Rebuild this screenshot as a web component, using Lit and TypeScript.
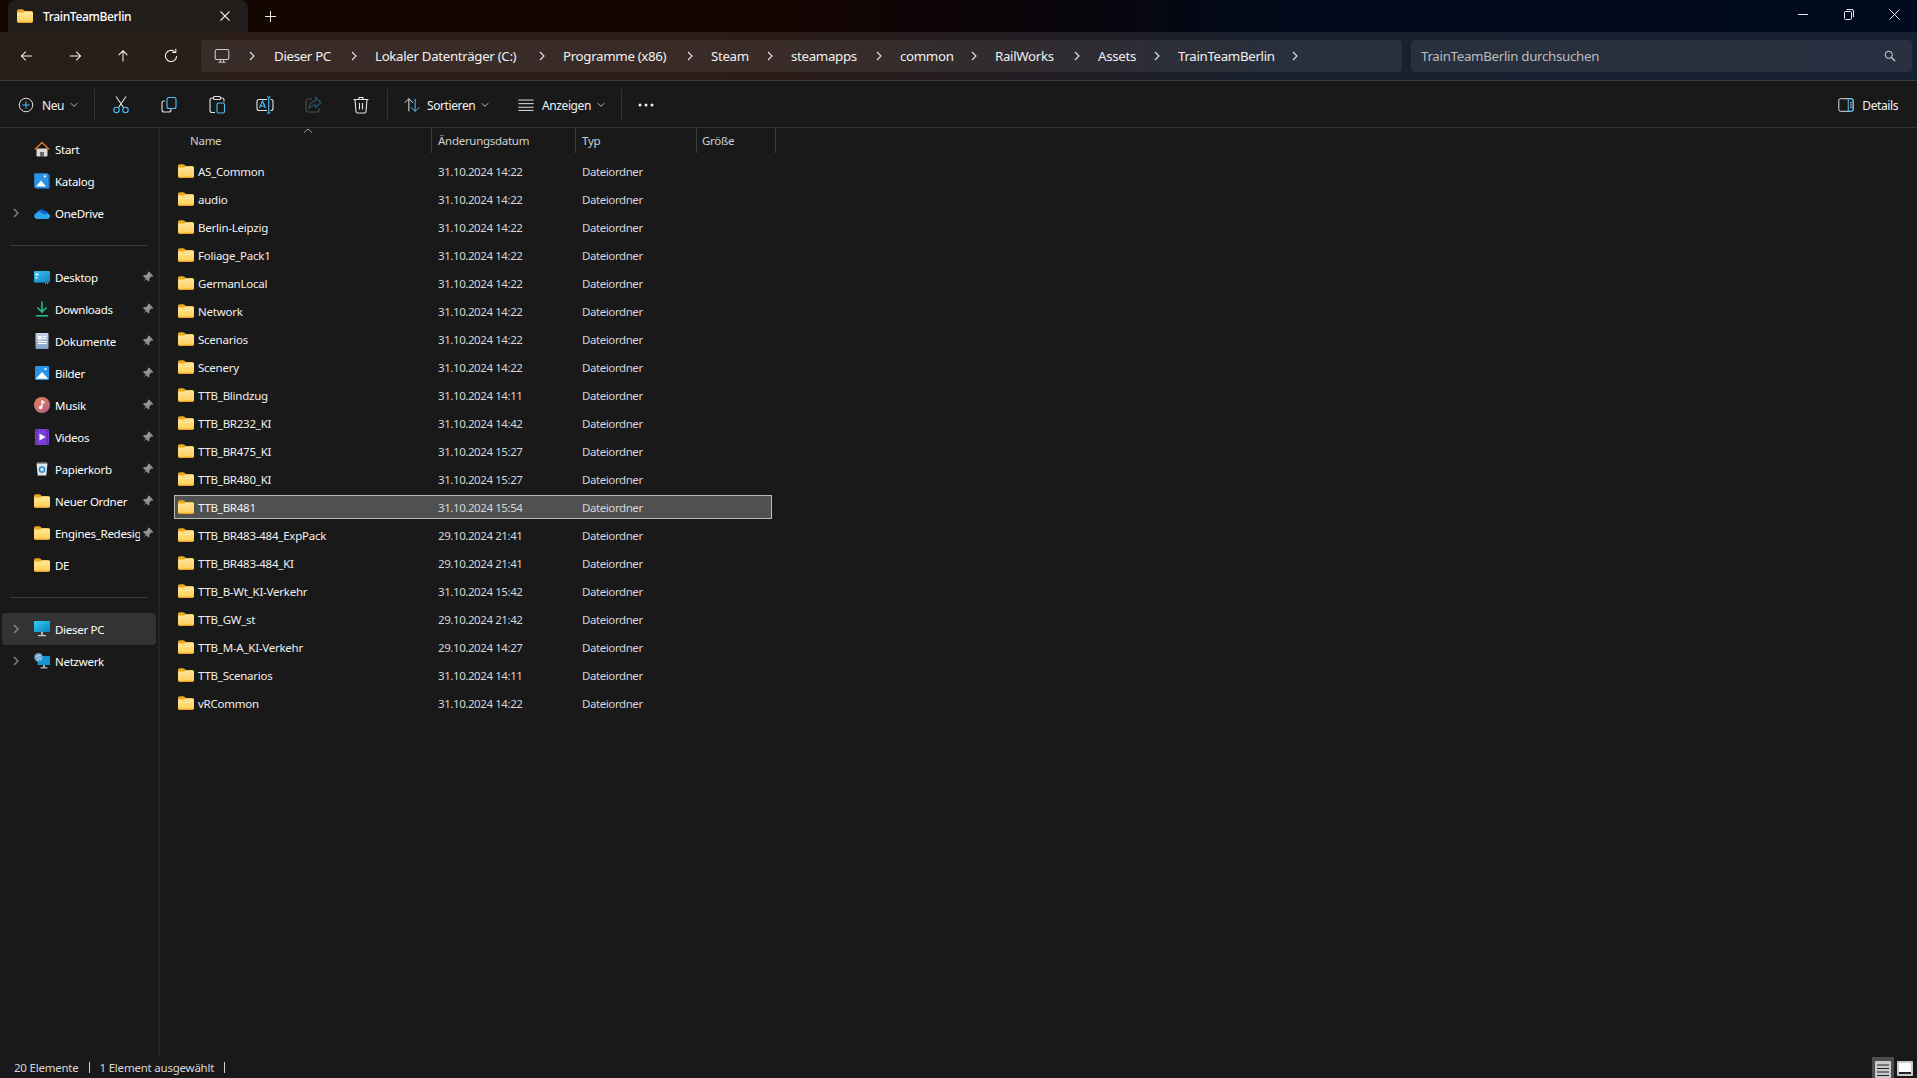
import { LitElement, html, css, svg } from "lit";
import { customElement } from "lit/decorators.js";

const folder = (w = 16, h = 14) => html`<svg class="ic" width=${w} height=${h} viewBox="0 0 16 14">
  <defs><linearGradient id="fg" x1="0" y1="0" x2="0" y2="1"><stop offset="0" stop-color="#ffe89c"/><stop offset="1" stop-color="#ffcf55"/></linearGradient></defs>
  <path d="M0 2.200C0 1 .8.3 1.800.3h3.400c.5 0 .9.2 1.300.5l1.300 1.100h6.400c1 0 1.800.8 1.800 1.800v1H0z" fill="#eaa81f"/>
  <path d="M0 4.600c0-.6.4-1 1-1h4.600c.4 0 .7-.1 1-.3l1.200-.9h6.400c1 0 1.800.8 1.800 1.800v7.700c0 1-.8 1.800-1.800 1.800H1.800c-1 0-1.800-.8-1.800-1.800z" fill="url(#fg)"/>
  <path d="M0 11.900c0 1 .8 1.800 1.800 1.800h12.400c1 0 1.800-.8 1.800-1.800v-.4c0 .8-.8 1.300-1.800 1.300H1.800c-1 0-1.800-.5-1.800-1.300z" fill="#eaa81f"/>
</svg>`;

const chev = html`<svg class="ic" width="8" height="10" viewBox="0 0 8 10"><path d="M2 1l4 4-4 4" fill="none" stroke="#e6e6e6" stroke-width="1.100"/></svg>`;
const navChev = html`<svg class="ic" width="8" height="10" viewBox="0 0 8 10"><path d="M2 1l4 4-4 4" fill="none" stroke="#8a8a8a" stroke-width="1.300"/></svg>`;
const down = html`<svg class="ic" width="8" height="6" viewBox="0 0 8 6"><path d="M.8 1.200L4 4.400l3.200-3.200" fill="none" stroke="#bdbdbd" stroke-width="1"/></svg>`;
const pin = html`<svg class="ic" width="12" height="12" viewBox="0 0 12 12"><path d="M7 .6l4.400 4.400-1 .6-1-.2-2 2v2l-1 1L3.700 7.700.9 11.100 4.300 8.300 1 5l1-1 2 .1 2-2-.2-1z" fill="#8f8f8f"/></svg>`;

const sideIcons: Record<string, unknown> = {
  home: html`<svg class="ic" width="16" height="16" viewBox="0 0 16 16"><path d="M2.500 7.500h11v7a1 1 0 0 1-1 1h-3v-4.500h-3v4.500h-3a1 1 0 0 1-1-1z" fill="#d9d9d9"/><path d="M6.500 11h3v4.500h-3z" fill="#6b6b6b"/><path d="M8 .6L.3 8l1 1L8 2.600 14.700 9l1-1z" fill="#e8761f"/></svg>`,
  cat: html`<svg class="ic" width="16" height="16" viewBox="0 0 16 16"><rect x="13.500" y="1.500" width="2.300" height="13.500" rx=".6" fill="#1c6fc4"/><rect x="1.500" y="14" width="14" height="1.800" rx=".5" fill="#1c6fc4"/><rect x=".2" y=".2" width="14" height="14.500" rx="1" fill="#2a93e6"/><path d="M2 13.500l5-6 5 6z" fill="#fff"/><circle cx="10.800" cy="3.400" r="1.100" fill="#fff"/></svg>`,
  cloud: html`<svg class="ic" width="16" height="11" viewBox="0 0 16 11"><path d="M3.500 5.200A3.800 3.800 0 0 1 10.300 2.800 3 3 0 0 1 14 6l-5 3z" fill="#0f62c4"/><path d="M3 11a3 3 0 0 1-.6-5.900 3 3 0 0 1 4.300-.9l3.500 2.100 2.400-.6A2.600 2.600 0 0 1 16 8.200 2.700 2.700 0 0 1 13.300 11z" fill="#2ba5ee"/></svg>`,
  desk: html`<svg class="ic" width="16" height="13" viewBox="0 0 16 13"><defs><linearGradient id="dk" x1="0" y1="0" x2="1" y2="1"><stop offset="0" stop-color="#36c6ef"/><stop offset="1" stop-color="#157fc5"/></linearGradient></defs><rect width="16" height="11.500" rx="1" fill="url(#dk)"/><rect x="1.500" y="2.500" width="3" height="2" fill="#e9f7fd"/><rect x="1.500" y="6" width="2" height="1.500" fill="#e9f7fd"/><rect x="11" y="11.800" width="1" height="1" fill="#b4e7f8"/><rect x="13" y="11.800" width="1" height="1" fill="#b4e7f8"/></svg>`,
  dl: html`<svg class="ic" width="16" height="16" viewBox="0 0 16 16"><path d="M8 .5v10M3.500 6.500L8 11l4.500-4.500" fill="none" stroke="#21b58e" stroke-width="1.700"/><rect x="2" y="14" width="12" height="1.600" fill="#21b58e"/></svg>`,
  doc: html`<svg class="ic" width="14" height="16" viewBox="0 0 14 16"><defs><linearGradient id="dc" x1="0" y1="0" x2="0" y2="1"><stop offset="0" stop-color="#c5d7ea"/><stop offset="1" stop-color="#7f9fc4"/></linearGradient></defs><rect x=".500" width="13" height="16" rx="1" fill="url(#dc)"/><rect x="3" y="3" width="3.500" height="3.500" fill="#fff"/><path d="M7.500 3.500h4M7.500 5.500h4M3 8.500h8.500M3 10.500h8.500" stroke="#fff" stroke-width="1"/></svg>`,
  pic: html`<svg class="ic" width="14" height="14" viewBox="0 0 14 14"><rect width="14" height="14" rx="1" fill="#2a93e6"/><path d="M.8 12.800L7 6l6.200 6.800z" fill="#fff"/><circle cx="10.500" cy="3" r="1.100" fill="#fff"/></svg>`,
  mus: html`<svg class="ic" width="16" height="16" viewBox="0 0 16 16"><defs><linearGradient id="ms" x1="0" y1="0" x2="1" y2="1"><stop offset="0" stop-color="#e88052"/><stop offset="1" stop-color="#b0608f"/></linearGradient></defs><circle cx="8" cy="8" r="8" fill="url(#ms)"/><path d="M8 3.500v6.500M8 3.500c.5 1.700 1.800 1.900 2.800 2.300" fill="none" stroke="#fff" stroke-width="1.400"/><circle cx="6.500" cy="10.500" r="1.700" fill="#fff"/></svg>`,
  vid: html`<svg class="ic" width="14" height="16" viewBox="0 0 14 16"><rect width="14" height="16" rx="1.500" fill="#7a3fd6"/><path d="M4.500 4.500v7l6-3.500z" fill="#fff"/><path d="M1 2h1.500M1 5h1.500M1 8h1.500M1 11h1.500M1 14h1.500M11.500 2H13M11.500 5H13M11.500 8H13M11.500 11H13M11.500 14H13" stroke="#2c1a5c" stroke-width="1.200"/></svg>`,
  bin: html`<svg class="ic" width="12" height="14" viewBox="0 0 12 14"><path d="M.5 1.500h11l-1.200 12H1.700z" fill="#e3e6e8"/><path d="M.5 1.500L1.500.5h9l1 1z" fill="#aab0b4"/><circle cx="6" cy="7.500" r="2.600" fill="none" stroke="#1f8ce0" stroke-width="1.500"/></svg>`,
  pc: html`<svg class="ic" width="16" height="16" viewBox="0 0 16 16"><defs><linearGradient id="pc" x1="0" y1="0" x2="1" y2="1"><stop offset="0" stop-color="#2fd0f0"/><stop offset="1" stop-color="#0f7ec5"/></linearGradient></defs><rect width="16" height="11" rx=".5" fill="url(#pc)"/><rect x="7" y="11" width="2" height="3" fill="#9fb4c2"/><rect x="4" y="14" width="8" height="1.200" fill="#c6d3dc"/></svg>`,
  net: html`<svg class="ic" width="16" height="16" viewBox="0 0 16 16"><rect x="3.500" y="3" width="12.500" height="9" rx=".5" fill="#1594d2"/><rect x="9" y="12" width="2" height="2.500" fill="#9fb4c2"/><rect x="6.500" y="14.300" width="7" height="1.100" fill="#c6d3dc"/><circle cx="4.500" cy="4.300" r="4.200" fill="#6fa6cf"/><path d="M1.500 4.500c1.500-2 3-1 5-2.500M3 7.800c.5-2 2-3 4.500-2.300" fill="none" stroke="#d6e6f2" stroke-width=".9"/></svg>`,
};

type Side = { t?: string; i?: string; c?: boolean; p?: boolean; sel?: boolean; sep?: boolean };
const side: Side[] = [
  { t: "Start", i: "home" }, { t: "Katalog", i: "cat" }, { t: "OneDrive", i: "cloud", c: true }, { sep: true },
  { t: "Desktop", i: "desk", p: true }, { t: "Downloads", i: "dl", p: true }, { t: "Dokumente", i: "doc", p: true },
  { t: "Bilder", i: "pic", p: true }, { t: "Musik", i: "mus", p: true }, { t: "Videos", i: "vid", p: true },
  { t: "Papierkorb", i: "bin", p: true }, { t: "Neuer Ordner", i: "folder", p: true }, { t: "Engines_Redesign", i: "folder", p: true },
  { t: "DE", i: "folder" }, { sep: true }, { t: "Dieser PC", i: "pc", c: true, sel: true }, { t: "Netzwerk", i: "net", c: true },
];

const rows: [string, string][] = [
  ["AS_Common", "31.10.2024 14:22"], ["audio", "31.10.2024 14:22"], ["Berlin-Leipzig", "31.10.2024 14:22"],
  ["Foliage_Pack1", "31.10.2024 14:22"], ["GermanLocal", "31.10.2024 14:22"], ["Network", "31.10.2024 14:22"],
  ["Scenarios", "31.10.2024 14:22"], ["Scenery", "31.10.2024 14:22"], ["TTB_Blindzug", "31.10.2024 14:11"],
  ["TTB_BR232_KI", "31.10.2024 14:42"], ["TTB_BR475_KI", "31.10.2024 15:27"], ["TTB_BR480_KI", "31.10.2024 15:27"],
  ["TTB_BR481", "31.10.2024 15:54"], ["TTB_BR483-484_ExpPack", "29.10.2024 21:41"], ["TTB_BR483-484_KI", "29.10.2024 21:41"],
  ["TTB_B-Wt_KI-Verkehr", "31.10.2024 15:42"], ["TTB_GW_st", "29.10.2024 21:42"], ["TTB_M-A_KI-Verkehr", "29.10.2024 14:27"],
  ["TTB_Scenarios", "31.10.2024 14:11"], ["vRCommon", "31.10.2024 14:22"],
];

const crumbs: [string, number][] = [
  ["Dieser PC", 59], ["Lokaler Datenträger (C:)", 146], ["Programme (x86)", 106], ["Steam", 38], ["steamapps", 67],
  ["common", 53], ["RailWorks", 61], ["Assets", 38], ["TrainTeamBerlin", 96],
];

const S = (body: unknown, w = 20, h = 20) => html`<svg class="ic" width=${w} height=${h} viewBox="0 0 20 20" fill="none" stroke-width="1.100">${body}</svg>`;
const W = "#e4e4e4", B = "#4cc2ff", N = "#f2f2f2";

@customElement("app-root")
export class AppRoot extends LitElement {
  static styles = css`
    :host { display: block; width: 1917px; height: 1078px; overflow: hidden; font-family: "Noto Sans", "Open Sans", sans-serif; color: #fff; font-size: 11.5px; letter-spacing: -0.28px; }
    .ic { display: block; flex: none; }
    .win { width: 1917px; height: 1078px; display: flex; flex-direction: column; background: #191919; }
    .chrome { background: linear-gradient(90deg, #130700 0%, #160500 38%, #0c0509 52%, #000a1a 68%, #000a1e 100%); flex: none; }
    .title { height: 32px; display: flex; align-items: stretch; }
    .tab { width: 240px; margin-left: 8px; background: #211d1a; border-radius: 8px 8px 0 0; display: flex; align-items: center; padding: 0 0 0 9px; box-sizing: border-box; }
    .tab .name { margin-left: 10px; flex: 1; font-size: 12px; font-weight: 500; letter-spacing: -0.35px; }
    .tab .x { width: 42px; display: flex; justify-content: center; }
    .tab .xgap { width: 2px; }
    .plus { width: 45px; display: flex; align-items: center; justify-content: center; }
    .spacer { flex: 1; }
    .wc { width: 45.500px; display: flex; align-items: center; justify-content: center; margin-top: -4px; }
    .wcs { display: flex; }
    .addr { height: 48px; background: rgba(255,255,255,.095); border-bottom: 1px solid #3a3a3a; display: flex; align-items: center; padding-left: 3px; }
    .nb { width: 48px; display: flex; justify-content: center; }
    .bar { margin-left: 6px; width: 1201px; height: 32px; background: rgba(255,255,255,.07); border-radius: 4px; display: flex; align-items: center; padding-left: 13px; box-sizing: border-box; font-size: 13.3px; letter-spacing: -0.33px; color: #f0f0f0; }
    .crumb { white-space: nowrap; }
    .cc { width: 42px; display: flex; justify-content: center; flex: none; }
    .cc.first { width: 44px; }
    .search { margin-left: 9px; width: 501px; height: 32px; background: rgba(255,255,255,.07); border-radius: 4px; display: flex; align-items: center; justify-content: space-between; padding: 0 16px 0 10px; box-sizing: border-box; font-size: 13.3px; letter-spacing: -0.3px; color: #bdbdbd; }
    .tools { flex: none; border-bottom: 1px solid #333; display: flex; align-items: center; padding: 2px 0 0 10px; box-sizing: border-box; height: 47px; font-size: 12px; letter-spacing: -0.4px; color: #f2f2f2; }
    .tb { display: flex; align-items: center; height: 32px; flex: none; }
    .tb.new { width: 84px; padding-left: 7px; box-sizing: border-box; }
    .tb.new span { margin: 0 6px 0 7px; width: 22px; }
    .tdiv { width: 1px; height: 32px; background: #333; flex: none; }
    .tgap { width: 2px; flex: none; }
    .tb.i { width: 48px; justify-content: center; }
    .tb.sort { width: 120px; padding-left: 15px; box-sizing: border-box; }
    .tb.sort span { margin: 0 6px 0 6px; width: 48px; }
    .tb.view { width: 113px; padding-left: 9px; box-sizing: border-box; }
    .tb.view span { margin: 0 6px 0 7px; width: 49px; }
    .tb.more { width: 48px; padding-left: 16px; box-sizing: border-box; }
    .tb.det { margin-left: auto; margin-right: 19px; }
    .tb.det span { margin-left: 7px; }
    .main { flex: 1; display: flex; min-height: 0; }
    .nav { width: 158px; border-right: 2px solid #242424; flex: none; padding-top: 5px; }
    .ni { height: 32px; margin-left: 2px; width: 154px; display: flex; align-items: center; border-radius: 4px; }
    .ni.sel { background: #333; }
    .ni .ch { width: 28px; display: flex; justify-content: center; flex: none; }
    .ni .ib { width: 16px; margin-left: 4px; display: flex; justify-content: center; flex: none; }
    .ni .t { margin-left: 5px; width: 85px; overflow: hidden; white-space: nowrap; flex: none; }
    .ni .p { width: 16px; display: flex; justify-content: center; flex: none; }
    .sep { height: 32px; display: flex; align-items: center; padding-left: 10px; }
    .sep i { display: block; width: 138px; height: 1px; background: #3a3a3a; }
    .content { flex: 1; min-width: 0; position: relative; }
    .head { height: 25px; display: grid; grid-template-columns: 272px 144px 121px 79px; color: #d0d0d0; position: relative; }
    .head div { border-right: 1px solid #3d3d3d; display: flex; align-items: center; padding-left: 6px; box-sizing: border-box; }
    .head div:first-child { padding-left: 30px; }
    .head div:last-of-type { padding-left: 5px; }
    .caret { position: absolute; left: 143px; top: 0; }
    .list { padding: 6px 0 0 14px; display: flex; flex-direction: column; gap: 4px; }
    .r { width: 598px; height: 24px; display: grid; grid-template-columns: 263px 144px 1fr; align-items: center; box-sizing: border-box; border: 1px solid transparent; color: #d6d6d6; letter-spacing: -0.42px; }
    .r.sel { background: #505050; border-color: #b9b9b9; }
    .r .n { display: flex; align-items: center; color: #f0f0f0; padding-left: 3px; letter-spacing: -0.24px; }
    .r .n span { margin-left: 4px; }
    .status { height: 21px; flex: none; display: flex; align-items: center; padding-left: 14px; color: #d8d8d8; letter-spacing: -0.22px; }
    .vl { width: 1px; height: 11px; background: #d0d0d0; margin: 0 10px; flex: none; }
    .views { margin-left: auto; display: flex; align-self: flex-end; margin-right: 1px; }
    .v { width: 22px; height: 21px; display: flex; justify-content: center; align-items: flex-start; padding-top: 4px; box-sizing: border-box; }
    .v.on { background: #4d4d4d; }
  `;

  private tool(body: unknown) {
    return html`<div class="tb i">${S(body)}</div>`;
  }

  render() {
    return html`<div class="win">
      <div class="chrome">
        <div class="title">
          <div class="tab">
            ${folder(16, 14)}
            <div class="name">TrainTeamBerlin</div>
            <div class="x"><svg class="ic" width="10" height="10" viewBox="0 0 10 10"><path d="M.5.5l9 9M9.500.5l-9 9" stroke="#e8e8e8" stroke-width="1.100"/></svg></div>
            <div class="xgap"></div>
          </div>
          <div class="plus"><svg class="ic" width="11" height="11" viewBox="0 0 11 11"><path d="M5.500 0v11M0 5.500h11" stroke="#e8e8e8" stroke-width="1"/></svg></div>
          <div class="spacer"></div>
          <div class="wcs">
            <div class="wc"><svg class="ic" width="10" height="10" viewBox="0 0 10 10"><path d="M0 5.500h10" stroke="#e8e8e8" stroke-width="1"/></svg></div>
            <div class="wc"><svg class="ic" width="10" height="11" viewBox="0 0 10 11"><rect x=".5" y="2.500" width="7" height="8" rx="1" fill="none" stroke="#e8e8e8"/><path d="M2.500.5h5.500a1.500 1.500 0 0 1 1.500 1.500v6" fill="none" stroke="#e8e8e8"/></svg></div>
            <div class="wc"><svg class="ic" width="11" height="11" viewBox="0 0 11 11"><path d="M.5.5l10 10M10.500.5l-10 10" stroke="#e8e8e8" stroke-width="1"/></svg></div>
          </div>
        </div>
        <div class="addr">
          <div class="nb">${S(svg`<path d="M16.500 10h-13M8.500 4.500L3 10l5.500 5.500" stroke="${N}" stroke-width="1.300"/>`, 16, 16)}</div>
          <div class="nb">${S(svg`<path d="M3.500 10h13M11.500 4.500L17 10l-5.500 5.500" stroke="${N}" stroke-width="1.300"/>`, 16, 16)}</div>
          <div class="nb">${S(svg`<path d="M10 17V3.500M4.500 9L10 3.500 15.500 9" stroke="${N}" stroke-width="1.300"/>`, 16, 16)}</div>
          <div class="nb">${S(svg`<path d="M14.500 4.600A7 7 0 1 0 17 10" stroke="${N}" stroke-width="1.300"/><path d="M11.500 5.500h4.500V1" stroke="${N}" stroke-width="1.300"/>`, 16, 16)}</div>
          <div class="bar">
            ${S(svg`<rect x="1.500" y="2" width="17" height="12.500" rx="2" stroke="#cfcfcf" stroke-width="1.300"/><path d="M8 14.500v3M12 14.500v3M5.500 17.800h9" stroke="#cfcfcf" stroke-width="1.300"/>`, 16, 16)}
            <div class="cc first">${chev}</div>
            ${crumbs.map(([t, w]) => html`<div class="crumb" style="width:${w}px">${t}</div><div class="cc">${chev}</div>`)}
          </div>
          <div class="search">
            <span>TrainTeamBerlin durchsuchen</span>
            ${S(svg`<circle cx="8" cy="8" r="6" stroke="#e4e4e4" stroke-width="1.600"/><path d="M12.500 12.500l6 6" stroke="#e4e4e4" stroke-width="1.800"/>`, 12, 12)}
          </div>
        </div>
      </div>

      <div class="tools">
        <div class="tb new">
          ${S(svg`<circle cx="10" cy="10" r="7.500" stroke="${W}"/><path d="M10 6v8M6 10h8" stroke="${B}"/>`, 18, 18)}
          <span>Neu</span>${down}
        </div>
        <div class="tdiv"></div>
        <div class="tgap"></div>
        ${this.tool(svg`<path d="M5 1.500L12.500 12.500M15 1.500L7.500 12.500" stroke="${W}"/><circle cx="5.500" cy="15" r="2.700" stroke="${B}"/><circle cx="14.500" cy="15" r="2.700" stroke="${B}"/>`)}
        ${this.tool(svg`<path d="M6 6H5a2 2 0 0 0-2 2v7a2 2 0 0 0 2 2h5a2 2 0 0 0 2-2v-1" stroke="${W}"/><rect x="8" y="2.500" width="9" height="11" rx="2" stroke="${B}"/>`)}
        ${this.tool(svg`<path d="M8 17.500H5a2 2 0 0 1-2-2V5a2 2 0 0 1 2-2h1.500M13.500 3H15a2 2 0 0 1 2 2v1.500" stroke="${W}"/><rect x="6.500" y="1.500" width="7" height="3" rx="1" stroke="${W}"/><rect x="10" y="8" width="7.500" height="10" rx="1.500" stroke="${B}"/>`)}
        ${this.tool(svg`<path d="M12 4.500H4a2 2 0 0 0-2 2v7a2 2 0 0 0 2 2h8M15.500 4.500H16a2 2 0 0 1 2 2v7a2 2 0 0 1-2 2h-.5" stroke="${W}"/><path d="M12 2h3.500M12 18h3.500M13.750 2v16" stroke="${B}"/><path d="M4.500 13l3-7 3 7M5.500 11h4" stroke="${B}"/>`)}
        ${this.tool(svg`<path d="M9 4H5a2 2 0 0 0-2 2v9a2 2 0 0 0 2 2h9a2 2 0 0 0 2-2v-2" stroke="#4d4d4d"/><path d="M12.500 2.500L18 7.500l-5.500 5V10c-3 0-5 1-6.500 3.500 0-4 2.500-7 6.500-7.500z" stroke="#25597c"/>`)}
        ${this.tool(svg`<path d="M2.500 4.500h15M8 4.500V2.500h4v2M4 4.500l1 12a1.500 1.500 0 0 0 1.500 1.500h7a1.500 1.500 0 0 0 1.500-1.500l1-12M8.500 8v6.500M11.500 8v6.500" stroke="${W}"/>`)}
        <div class="tgap"></div>
        <div class="tdiv"></div>
        <div class="tb sort">
          ${S(svg`<path d="M6.500 17V3M2 7.500L6.500 3 11 7.500" stroke="${W}"/><path d="M13.500 3v14M9 12.500L13.500 17l4.500-4.500" stroke="${B}"/>`, 18, 18)}
          <span>Sortieren</span>${down}
        </div>
        <div class="tb view">
          ${S(svg`<path d="M1.500 4.500h17M1.500 8.500h17M1.500 12.500h17M1.500 16h17" stroke="${W}"/>`, 18, 18)}
          <span>Anzeigen</span>${down}
        </div>
        <div class="tdiv"></div>
        <div class="tb more"><svg class="ic" width="16" height="4" viewBox="0 0 16 4"><circle cx="2" cy="2" r="1.500" fill="#eee"/><circle cx="8" cy="2" r="1.500" fill="#eee"/><circle cx="14" cy="2" r="1.500" fill="#eee"/></svg></div>
        <div class="tb det">
          ${S(svg`<rect x="2" y="3" width="16" height="14" rx="2" stroke="${W}"/><path d="M12.500 3v14" stroke="${B}"/><path d="M12.500 3H16a2 2 0 0 1 2 2v10a2 2 0 0 1-2 2h-3.500" stroke="${B}"/><path d="M14.500 7.500h2M14.500 10h2M14.500 12.500h2" stroke="${W}"/>`, 18, 18)}
          <span>Details</span>
        </div>
      </div>

      <div class="main">
        <div class="nav">
          ${side.map((s) => s.sep ? html`<div class="sep"><i></i></div>` : html`<div class="ni ${s.sel ? "sel" : ""}">
            <div class="ch">${s.c ? navChev : ""}</div>
            <div class="ib">${s.i === "folder" ? folder(16, 14) : sideIcons[s.i!]}</div>
            <div class="t">${s.t}</div>
            <div class="p">${s.p ? pin : ""}</div>
          </div>`)}
        </div>
        <div class="content">
          <div class="head">
            <div>Name</div><div>Änderungsdatum</div><div>Typ</div><div>Größe</div>
            <svg class="caret ic" width="10" height="6" viewBox="0 0 10 6"><path d="M1 4.500L5 1l4 3.500" fill="none" stroke="#a0a0a0" stroke-width="1"/></svg>
          </div>
          <div class="list">
            ${rows.map(([n, d]) => html`<div class="r ${n === "TTB_BR481" ? "sel" : ""}">
              <div class="n">${folder(16, 14)}<span>${n}</span></div><div>${d}</div><div>Dateiordner</div>
            </div>`)}
          </div>
        </div>
      </div>

      <div class="status">
        <span>20 Elemente</span><div class="vl"></div><span>1 Element ausgewählt</span><div class="vl"></div>
        <div class="views">
          <div class="v on"><svg class="ic" width="16" height="17" viewBox="0 0 16 17"><rect width="16" height="17" rx="1" fill="#c9c9c9"/><path d="M2 4h12M2 7.500h12M2 11h12M2 14.500h12" stroke="#222" stroke-width="1.200"/></svg></div>
          <div class="v"><svg class="ic" width="16" height="15" viewBox="0 0 16 15"><rect width="16" height="15" rx="1" fill="#c9c9c9"/><rect x="2" y="2" width="12" height="9" fill="#fff"/><rect x="2" y="11" width="12" height="2" fill="#222"/></svg></div>
        </div>
      </div>
    </div>`;
  }
}
